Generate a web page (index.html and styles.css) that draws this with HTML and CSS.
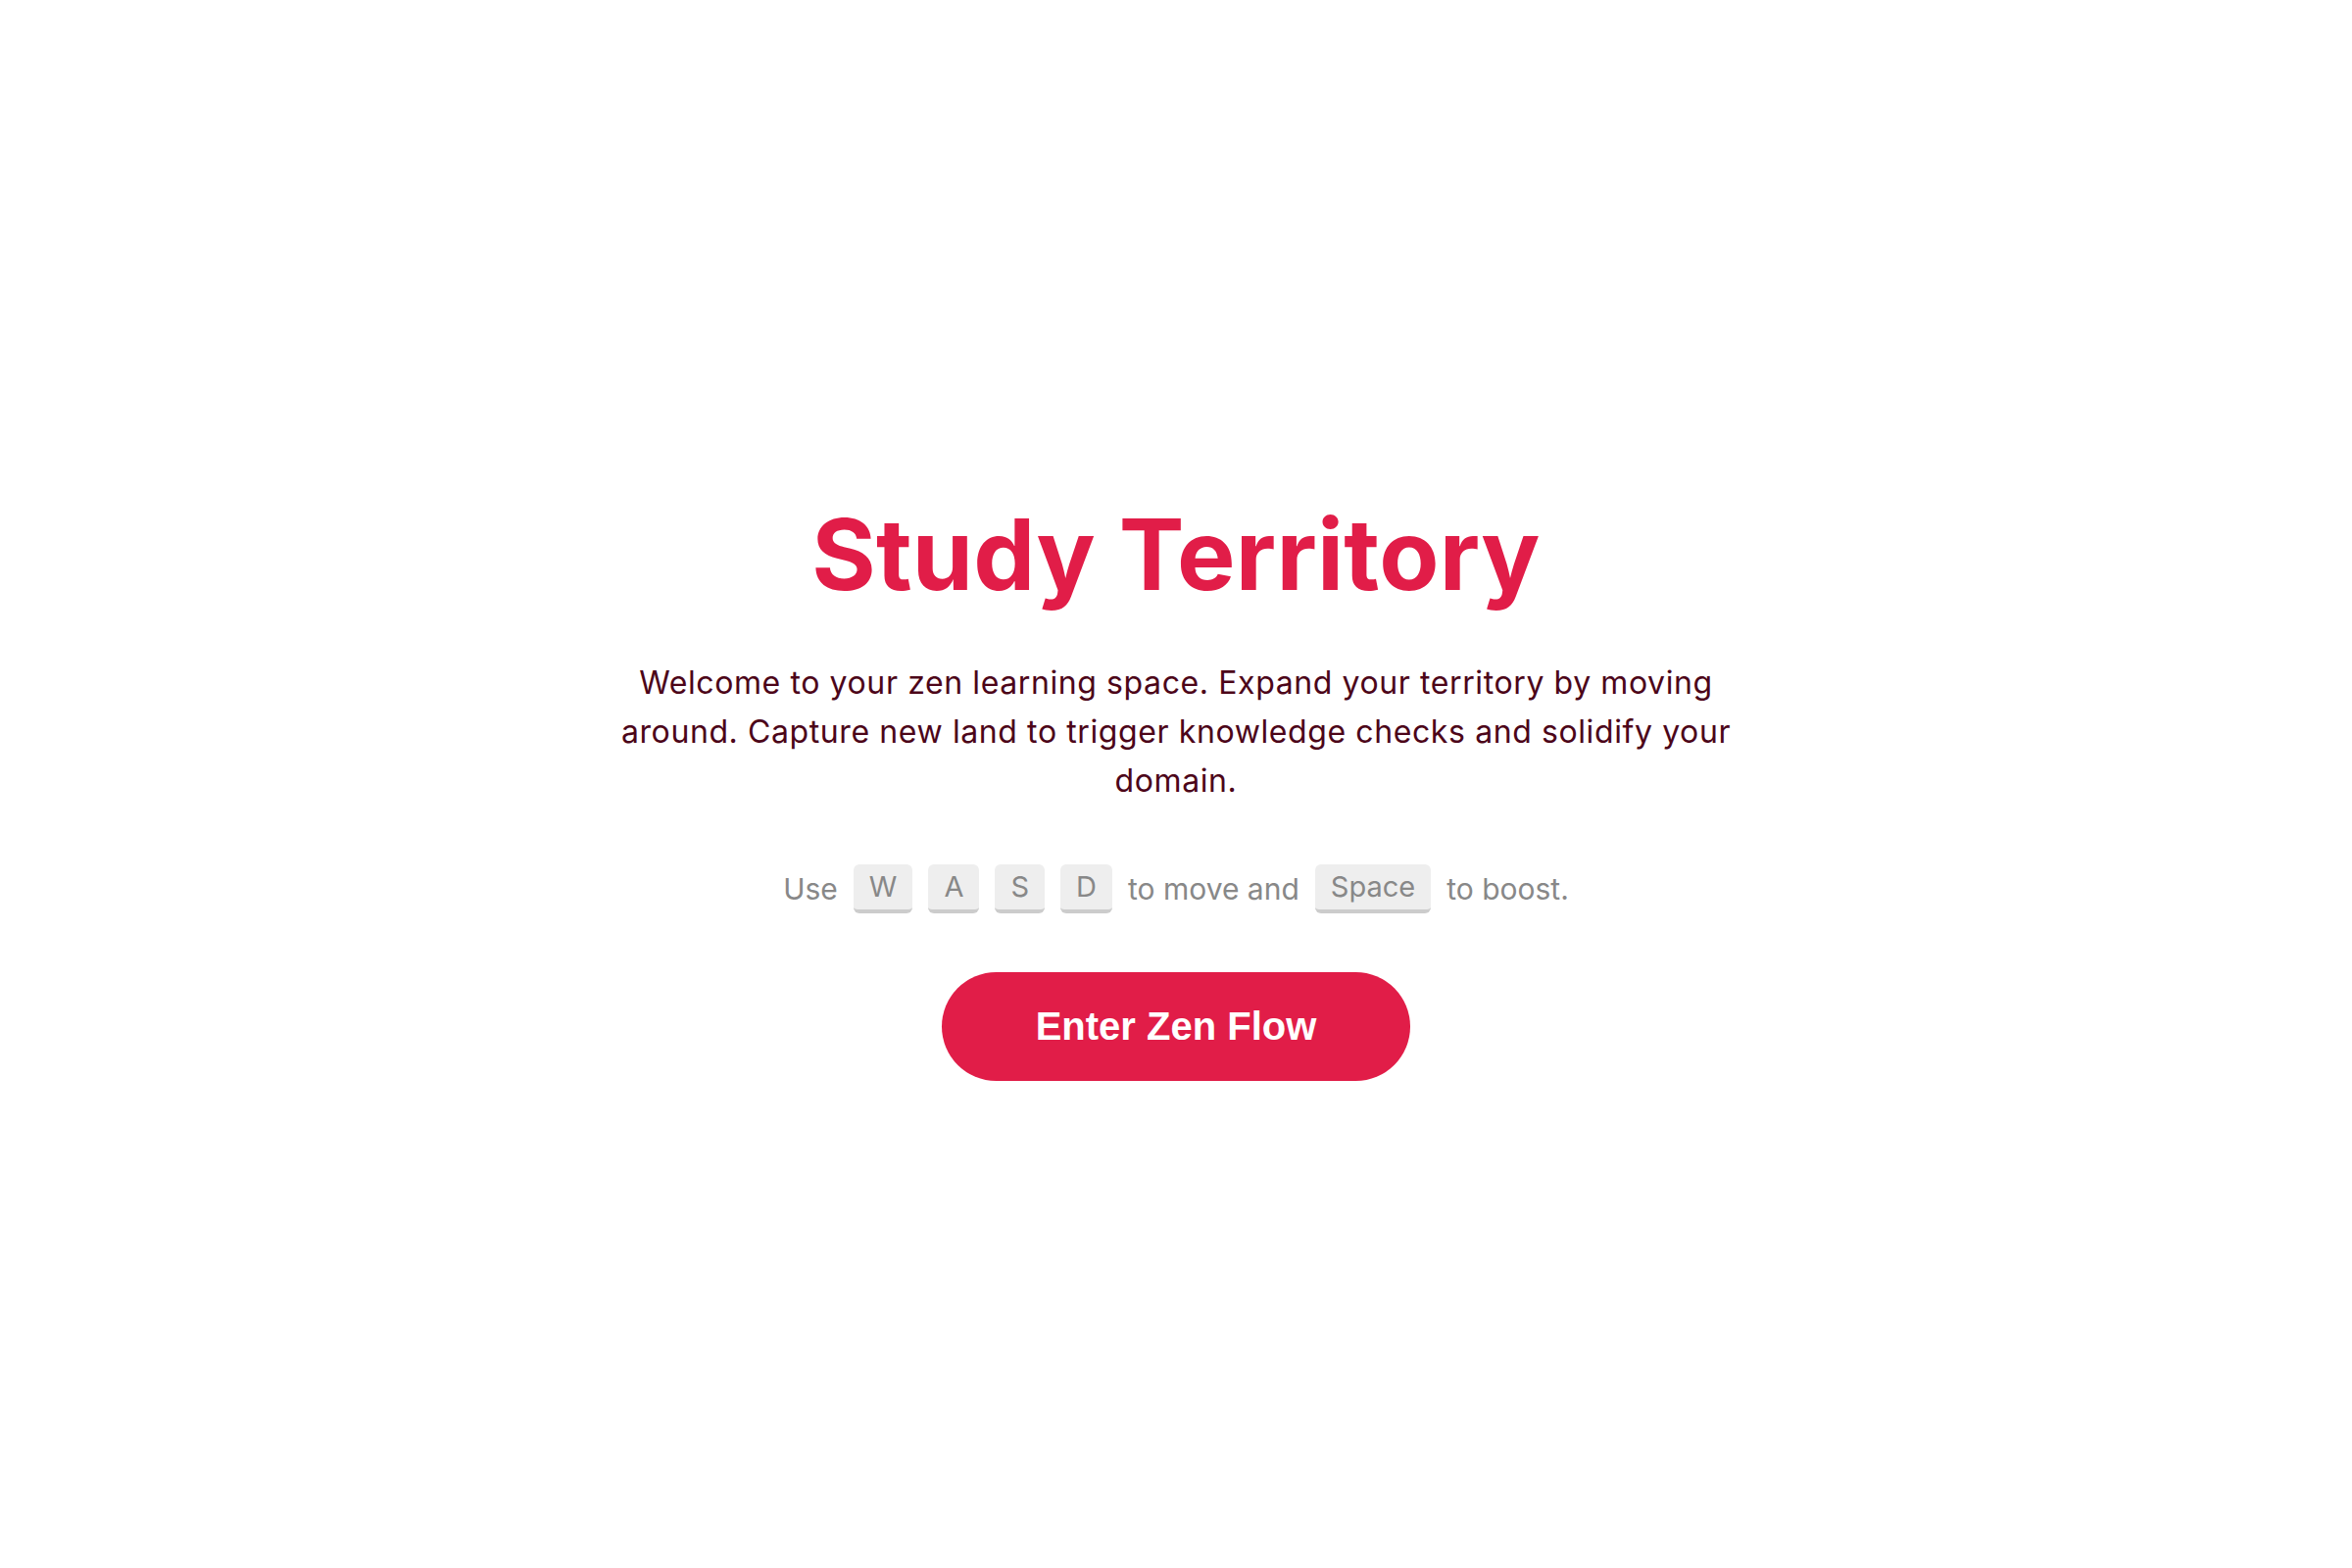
FILE: index.html
```html
<!DOCTYPE html>
<html lang="en">
<head>
<meta charset="utf-8">
<title>Study Territory</title>
<link rel="stylesheet" href="styles.css">
</head>
<body>
<main class="screen">
  <section class="intro">
    <h1 class="title">Study Territory</h1>
    <p class="lead">Welcome to your zen learning space. Expand your territory by moving around. Capture new land to trigger knowledge checks and solidify your domain.</p>
    <p class="hint">Use <kbd class="key">W</kbd> <kbd class="key">A</kbd> <kbd class="key">S</kbd> <kbd class="key">D</kbd> to move and <kbd class="key">Space</kbd> to boost.</p>
    <button class="cta" type="button">Enter Zen Flow</button>
  </section>
</main>
</body>
</html>
```
FILE: styles.css
```css
* { box-sizing: border-box; }
html, body { margin: 0; padding: 0; background: #ffffff; }
body { font-family: "Inter", "Noto Sans", sans-serif; }

.screen {
  min-height: 100vh;
  padding-top: 9px;
  display: flex;
  align-items: center;
  justify-content: center;
}

.intro {
  display: flex;
  flex-direction: column;
  align-items: center;
  text-align: center;
}

.title {
  margin: 0;
  font-size: 100px;
  font-weight: 700;
  line-height: 1.2;
  color: #e11d48;
  letter-spacing: 0.2px;
}

.lead {
  margin: 46px 0 0;
  max-width: 1180px;
  font-size: 32px;
  line-height: 50px;
  letter-spacing: 0.6px;
  color: #4c0519;
}

.hint {
  margin: 60px 0 0;
  font-size: 30px;
  line-height: 50px;
  color: #888888;
  display: flex;
  align-items: center;
  gap: 16px;
}

.key {
  font-family: inherit;
  font-size: 29px;
  line-height: 46px;
  background: #eeeeee;
  color: #888888;
  border-radius: 6px;
  border-bottom: 4px solid #cccccc;
  padding: 0 16px;
}

.cta {
  margin-top: 60px;
  font-family: "Liberation Sans", Arial, sans-serif;
  font-weight: 700;
  font-size: 40px;
  color: #ffffff;
  background: #e11d48;
  border: none;
  border-radius: 999px;
  padding: 32px 96px;
  line-height: 47px;
}
```
